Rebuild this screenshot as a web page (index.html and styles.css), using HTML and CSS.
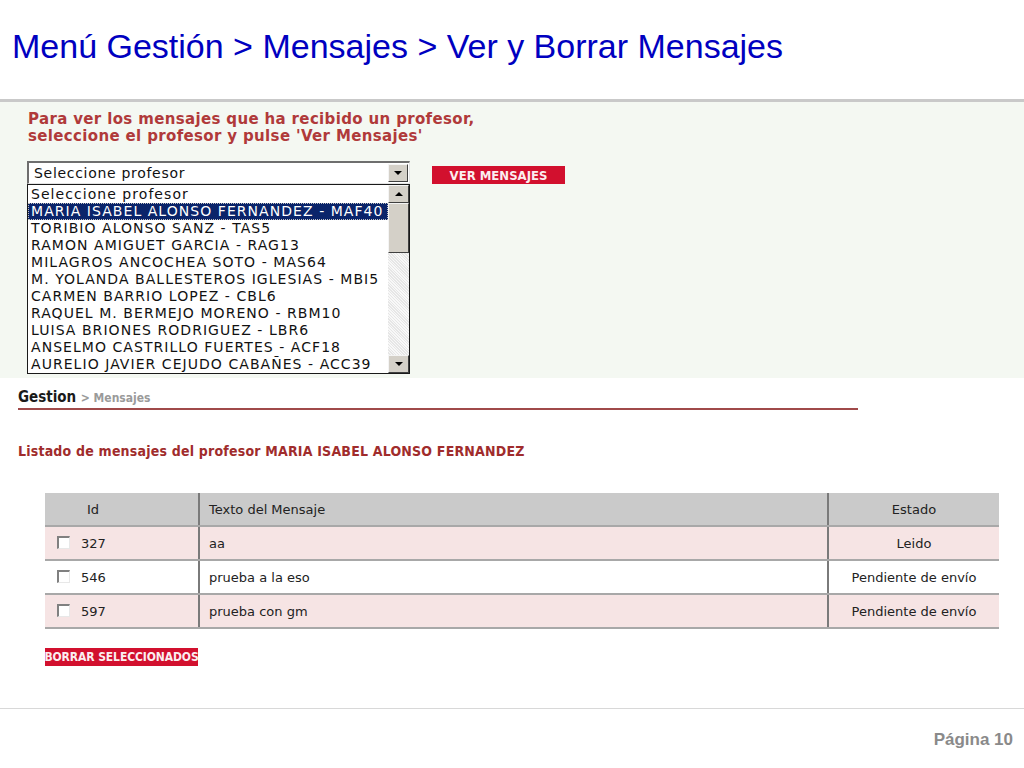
FILE: index.html
```html
<!DOCTYPE html>
<html lang="es">
<head>
<meta charset="utf-8">
<title>Ver y Borrar Mensajes</title>
<link rel="stylesheet" href="styles.css">
</head>
<body>
<header class="title-bar">
  <h1 class="title">Menú Gestión &gt; Mensajes &gt; Ver y Borrar Mensajes</h1>
</header>

<section class="panel">
  <p class="intro">Para ver los mensajes que ha recibido un profesor,<br>seleccione el profesor y pulse 'Ver Mensajes'</p>
  <div class="picker">
    <div class="select-col">
      <div class="select">
        <span class="select-text">Seleccione profesor</span>
        <span class="arrow-btn"><span class="tri-down"></span></span>
      </div>
      <div class="listbox">
        <ul class="options">
          <li>Seleccione profesor</li>
          <li class="selected">MARIA ISABEL ALONSO FERNANDEZ - MAF40</li>
          <li>TORIBIO ALONSO SANZ - TAS5</li>
          <li>RAMON AMIGUET GARCIA - RAG13</li>
          <li>MILAGROS ANCOCHEA SOTO - MAS64</li>
          <li>M. YOLANDA BALLESTEROS IGLESIAS - MBI5</li>
          <li>CARMEN BARRIO LOPEZ - CBL6</li>
          <li>RAQUEL M. BERMEJO MORENO - RBM10</li>
          <li>LUISA BRIONES RODRIGUEZ - LBR6</li>
          <li>ANSELMO CASTRILLO FUERTES - ACF18</li>
          <li>AURELIO JAVIER CEJUDO CABAÑES - ACC39</li>
        </ul>
        <div class="scrollbar">
          <span class="arrow-btn sb-btn"><span class="tri-up"></span></span>
          <span class="thumb"></span>
          <span class="track"></span>
          <span class="arrow-btn sb-btn"><span class="tri-down"></span></span>
        </div>
      </div>
    </div>
    <span class="red-btn ver">VER MENSAJES</span>
  </div>
</section>

<section class="content">
  <div class="crumbs"><span class="crumb-main">Gestion</span> <span class="crumb-sub">&gt; Mensajes</span></div>
  <h2 class="listado">Listado de mensajes del profesor MARIA ISABEL ALONSO FERNANDEZ</h2>
  <table class="msgs">
    <thead>
      <tr><th class="c-id">Id</th><th class="c-txt">Texto del Mensaje</th><th class="c-est">Estado</th></tr>
    </thead>
    <tbody>
      <tr class="odd"><td class="c-id"><span class="chk"></span>327</td><td class="c-txt">aa</td><td class="c-est">Leido</td></tr>
      <tr><td class="c-id"><span class="chk"></span>546</td><td class="c-txt">prueba a la eso</td><td class="c-est">Pendiente de envío</td></tr>
      <tr class="odd"><td class="c-id"><span class="chk"></span>597</td><td class="c-txt">prueba con gm</td><td class="c-est">Pendiente de envío</td></tr>
    </tbody>
  </table>
  <span class="red-btn borrar">BORRAR SELECCIONADOS</span>
</section>

<footer class="footer">
  <span class="page">Página 10</span>
</footer>
</body>
</html>
```

FILE: styles.css
```css
* { box-sizing: border-box; }
html, body { margin: 0; padding: 0; background: #ffffff; }
body { width: 1024px; height: 768px; overflow: hidden; font-family: "DejaVu Sans", Verdana, sans-serif; }

.title-bar {
  height: 102px;
  border-bottom: 3px solid #c9c9c9;
  padding: 26px 0 0 12px;
}
.title {
  margin: 0;
  font-family: "Liberation Sans", Arial, sans-serif;
  font-weight: normal;
  font-size: 34px;
  line-height: 40px;
  color: #0000c0;
}

.panel {
  height: 276px;
  background: #f4f8f2;
  padding: 9px 0 0 27px;
}
.intro {
  margin: 0 0 0 1px;
  font-weight: bold;
  font-size: 15px;
  line-height: 17px;
  letter-spacing: 0.35px;
  color: #b03a3a;
}
.picker {
  display: flex;
  align-items: flex-start;
  gap: 22px;
  margin-top: 16px;
}
.select-col { width: 383px; }
.select {
  height: 23px;
  display: flex;
  align-items: center;
  justify-content: space-between;
  background: #fff;
  border-top: 2px solid #6e6e6e;
  border-left: 2px solid #6e6e6e;
  border-right: 1px solid #e4e4e4;
  border-bottom: 1px solid #e4e4e4;
  padding: 0 1px 0 5px;
}
.select-text { font-size: 14px; letter-spacing: 0.7px; color: #111; }

.arrow-btn {
  width: 20px;
  height: 18px;
  display: flex;
  align-items: center;
  justify-content: center;
  background: #d4d0c8;
  border-top: 1px solid #f4f4f4;
  border-left: 1px solid #f4f4f4;
  border-right: 1px solid #404040;
  border-bottom: 1px solid #404040;
}
.tri-down { width: 0; height: 0; border-left: 4px solid transparent; border-right: 4px solid transparent; border-top: 4px solid #000; }
.tri-up { width: 0; height: 0; border-left: 4px solid transparent; border-right: 4px solid transparent; border-bottom: 4px solid #000; }

.listbox {
  display: flex;
  height: 190px;
  background: #fff;
  border: 1px solid #1a1a1a;
}
.options {
  flex: 1;
  list-style: none;
  margin: 0;
  padding: 1px 0 0 0;
  font-size: 14px;
  line-height: 17px;
  letter-spacing: 1.05px;
  color: #111;
  overflow: hidden;
}
.options li { padding-left: 3px; white-space: nowrap; }
.options li.selected {
  background: #0a246a;
  color: #fff;
  outline: 1px dotted #c0c0c0;
  outline-offset: -1px;
}
.scrollbar {
  width: 21px;
  flex: none;
  display: flex;
  flex-direction: column;
  background: repeating-linear-gradient(45deg, #e6e6e6 0 1px, #f8f8f8 1px 2px);
}
.sb-btn { width: 21px; height: 18px; flex: none; }
.thumb {
  height: 50px;
  flex: none;
  background: #d4d0c8;
  border-top: 1px solid #f4f4f4;
  border-left: 1px solid #f4f4f4;
  border-right: 1px solid #404040;
  border-bottom: 1px solid #404040;
}
.track { flex: 1; }

.red-btn {
  display: inline-flex;
  align-items: center;
  justify-content: center;
  background: #d2102e;
  color: #fbeef0;
  font-family: "DejaVu Sans Condensed", "DejaVu Sans", sans-serif;
  font-weight: bold;
  white-space: nowrap;
}
.ver { width: 133px; height: 18px; margin-top: 5px; font-size: 13px; }

.content { padding: 9px 0 0 18px; height: 330px; }
.crumbs {
  width: 840px;
  border-bottom: 2px solid #a04a4a;
  height: 23px;
  font-family: "DejaVu Sans Condensed", "DejaVu Sans", sans-serif;
}
.crumb-main { font-weight: bold; font-size: 15px; color: #1a1a1a; }
.crumb-sub { font-weight: bold; font-size: 12px; color: #9a9a9a; }
.listado {
  margin: 33px 0 0 0;
  font-family: "DejaVu Sans Condensed", "DejaVu Sans", sans-serif;
  font-weight: bold;
  font-size: 14px;
  line-height: 16px;
  letter-spacing: 0.2px;
  color: #a02c2c;
}

.msgs {
  margin: 34px 0 0 27px;
  width: 954px;
  border-collapse: collapse;
  font-size: 13px;
  color: #222;
}
.msgs th {
  background: #cacaca;
  font-weight: normal;
  height: 33px;
  border-bottom: 2px solid #a8a8a8;
}
.msgs td { height: 34px; border-bottom: 2px solid #a8a8a8; }
.msgs tr.odd td { background: #f6e4e4; }
.c-id { width: 154px; text-align: left; padding-left: 12px; border-right: 2px solid #7a7a7a; }
th.c-id { padding-left: 42px; }
.c-txt { text-align: left; padding-left: 9px; border-right: 2px solid #7a7a7a; }
.c-est { width: 171px; text-align: center; }
.chk {
  display: inline-block;
  width: 13px;
  height: 13px;
  margin-right: 11px;
  vertical-align: -1px;
  background: #fff;
  border-top: 2px solid #808080;
  border-left: 2px solid #808080;
  border-right: 1px solid #e8e8e8;
  border-bottom: 1px solid #e8e8e8;
}
.borrar { width: 153px; height: 18px; margin: 19px 0 0 27px; font-size: 12px; letter-spacing: -0.1px; }

.footer {
  border-top: 1px solid #d8d8d8;
  height: 58px;
  display: flex;
  justify-content: flex-end;
  padding: 21px 11px 0 0;
}
.page {
  font-family: "Liberation Sans", Arial, sans-serif;
  font-weight: bold;
  font-size: 17px;
  color: #8a8a8a;
}
```
